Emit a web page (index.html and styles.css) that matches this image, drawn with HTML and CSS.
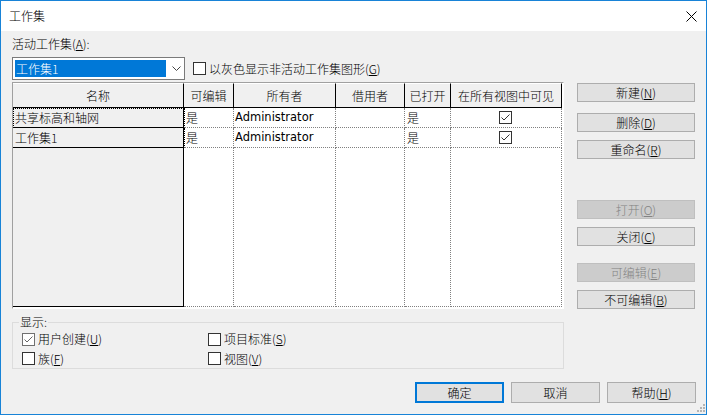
FILE: index.html
```html
<!DOCTYPE html>
<html lang="zh-CN">
<head>
<meta charset="utf-8">
<title>工作集</title>
<link rel="stylesheet" href="styles.css">
</head>
<body>
<div class="window">
  <header class="titlebar">
    <span class="title">工作集</span>
    <svg class="close" width="11" height="11" viewBox="0 0 11 11"><path d="M0.5 0.5L10.5 10.5M10.5 0.5L0.5 10.5" stroke="#000" stroke-width="1" fill="none"/></svg>
  </header>
  <main class="content">
    <div class="top">
      <div class="left">
        <div class="label">活动工作集(<u>A</u>):</div>
        <div class="combo-row">
          <div class="combo">
            <span class="combo-sel">工作集1</span>
            <svg class="chev" width="9" height="5" viewBox="0 0 9 5"><path d="M0.5 0.5L4.5 4.5L8.5 0.5" stroke="#444" stroke-width="1" fill="none"/></svg>
          </div>
          <label class="check"><span class="box"></span>以灰色显示非活动工作集图形(<u>G</u>)</label>
        </div>
        <div class="grid">
          <div class="hd">名称</div>
          <div class="hd">可编辑</div>
          <div class="hd">所有者</div>
          <div class="hd">借用者</div>
          <div class="hd">已打开</div>
          <div class="hd">在所有视图中可见</div>

          <div class="rh focus">共享标高和轴网</div>
          <div class="c first">是</div>
          <div class="c latin">Administrator</div>
          <div class="c"></div>
          <div class="c">是</div>
          <div class="c center"><span class="box tick"><svg width="11" height="11" viewBox="0 0 11 11"><path d="M1.5 5.5L4 8L9.5 2.5" stroke="#333" stroke-width="1" fill="none"/></svg></span></div>

          <div class="rh">工作集1</div>
          <div class="c first">是</div>
          <div class="c latin">Administrator</div>
          <div class="c"></div>
          <div class="c">是</div>
          <div class="c center"><span class="box tick"><svg width="11" height="11" viewBox="0 0 11 11"><path d="M1.5 5.5L4 8L9.5 2.5" stroke="#333" stroke-width="1" fill="none"/></svg></span></div>

          <div class="rh"></div>
          <div class="c"></div>
          <div class="c"></div>
          <div class="c"></div>
          <div class="c"></div>
          <div class="c"></div>
        </div>
        <fieldset class="group">
          <legend>显示:</legend>
          <div class="opts">
            <label class="check"><span class="box checked"><svg width="11" height="11" viewBox="0 0 11 11"><path d="M1.5 5.5L4 8L9.5 2.5" stroke="#666" stroke-width="1" fill="none"/></svg></span>用户创建(<u>U</u>)</label>
            <label class="check"><span class="box"></span>项目标准(<u>S</u>)</label>
            <label class="check"><span class="box"></span>族(<u>F</u>)</label>
            <label class="check"><span class="box"></span>视图(<u>V</u>)</label>
          </div>
        </fieldset>
      </div>
      <div class="right">
        <button class="btn b-new">新建(<u>N</u>)</button>
        <button class="btn b-del">删除(<u>D</u>)</button>
        <button class="btn b-ren">重命名(<u>R</u>)</button>
        <button class="btn b-open" disabled>打开(<u>O</u>)</button>
        <button class="btn b-close">关闭(<u>C</u>)</button>
        <button class="btn b-edit" disabled>可编辑(<u>E</u>)</button>
        <button class="btn b-nedit">不可编辑(<u>B</u>)</button>
      </div>
    </div>
    <div class="footer">
      <button class="btn fbtn default">确定</button>
      <button class="btn fbtn">取消</button>
      <button class="btn fbtn">帮助(<u>H</u>)</button>
    </div>
    <svg class="grip" width="8" height="8" viewBox="0 0 8 8"><g fill="#b4b4b4"><rect x="6" y="0" width="2" height="2"/><rect x="3" y="3" width="2" height="2"/><rect x="6" y="3" width="2" height="2"/><rect x="0" y="6" width="2" height="2"/><rect x="3" y="6" width="2" height="2"/><rect x="6" y="6" width="2" height="2"/></g></svg>
  </main>
</div>
</body>
</html>
```

FILE: styles.css
```css
html, body {
  margin: 0;
  padding: 0;
  background: #f0f0f0;
}
body {
  font-family: "Noto Sans CJK SC", "Liberation Sans", sans-serif;
  font-size: 12px;
  font-weight: 300;
  line-height: 14px;
  color: #000;
}
u { text-decoration: underline; text-underline-offset: 1px; }

.window {
  width: 707px;
  height: 415px;
  box-sizing: border-box;
  border: 1px solid #1883d7;
  display: flex;
  flex-direction: column;
  background: #f0f0f0;
}

.titlebar {
  height: 30px;
  flex: none;
  background: #fff;
  display: flex;
  align-items: center;
  justify-content: space-between;
  padding: 0 9px 0 8px;
}
.title { line-height: 14px; }
.close { display: block; }

.content {
  flex: 1;
  position: relative;
  padding: 0 10px 0 11px;
  display: flex;
  flex-direction: column;
}

.top { display: flex; }
.left { width: 552px; display: flex; flex-direction: column; }

.label { margin-top: 6px; height: 14px; }

.combo-row {
  margin-top: 6px;
  height: 23px;
  display: flex;
  align-items: center;
}
.combo {
  width: 173px;
  height: 23px;
  box-sizing: border-box;
  border: 1px solid #7a7a7a;
  background: #fff;
  padding: 2px;
  display: flex;
  align-items: center;
}
.combo-sel {
  width: 151px;
  height: 17px;
  line-height: 17px;
  background: #0078d7;
  color: #fff;
  padding-left: 1px;
  box-sizing: border-box;
}
.chev { margin-left: 6px; display: block; }

.check {
  display: flex;
  align-items: center;
}
.box {
  width: 13px;
  height: 13px;
  box-sizing: border-box;
  border: 1px solid #333;
  background: #fff;
  display: inline-flex;
  align-items: center;
  justify-content: center;
  flex: none;
  margin-right: 3px;
}
.box.checked { border-color: #707070; }
.box.tick { border-color: #333; }
.box svg { display: block; }
.combo-row .check { margin-left: 8px; }

.grid {
  margin-top: 2px;
  width: 552px;
  height: 227px;
  box-sizing: border-box;
  border: 1px solid;
  border-color: #a0a0a0 #fff #fff #a0a0a0;
  background: #fff;
  display: grid;
  grid-template-columns: 171px 50px 102px 69px 46px 111px;
  grid-template-rows: 25px 20px 20px 159px;
  align-content: start;
  justify-content: start;
}
.hd {
  background: #f0f0f0;
  border-right: 1px solid #000;
  border-bottom: 1px solid #000;
  border-top: 1px solid #fff;
  text-align: center;
  line-height: 23px;
  white-space: nowrap;
}
.rh {
  background: #f0f0f0;
  border-right: 1px solid #000;
  border-bottom: 1px solid #000;
  padding-left: 2px;
  line-height: 19px;
}
.rh.focus {
  outline: 1px dotted #000;
  outline-offset: -1px;
}
.c {
  border-right: 1px dotted #808080;
  border-bottom: 1px dotted #808080;
  padding-left: 2px;
  line-height: 19px;
  white-space: nowrap;
}
.c.first {
  border-left: 1px dotted #000;
  padding-left: 1px;
}
.c.latin {
  font-family: "DejaVu Sans", sans-serif;
  font-weight: 400;
  font-size: 11.5px;
  padding-left: 1px;
}
.c.center {
  display: flex;
  align-items: center;
  justify-content: center;
  padding: 0 1px 0 0;
}
.c.center .box { margin: 0; }

.group {
  margin: 6px 0 0 0;
  padding: 0 0 0 9px;
  border: 1px solid #dcdcdc;
  min-width: 0;
}
.group legend {
  padding: 0 1px;
  margin-left: -3px;
  line-height: 14px;
}
.opts {
  display: grid;
  grid-template-columns: 186px 1fr;
  grid-template-rows: 20px 19px;
}

.right {
  width: 118px;
  margin-left: 13px;
  display: flex;
  flex-direction: column;
}
.btn {
  font-family: inherit;
  font-size: 12px;
  font-weight: 300;
  line-height: 14px;
  color: #000;
  background: #e1e1e1;
  border: 1px solid #adadad;
  padding: 0;
  margin: 0;
  box-sizing: border-box;
}
.btn:disabled {
  background: #cccccc;
  border-color: #bfbfbf;
  color: #838383;
}
.right .btn { height: 19px; width: 118px; }
.right .b-new { margin-top: 52px; }
.right .b-del { margin-top: 11px; }
.right .b-ren { margin-top: 8px; }
.right .b-open { margin-top: 41px; }
.right .b-close { margin-top: 8px; }
.right .b-edit { margin-top: 17px; }
.right .b-nedit { margin-top: 8px; }

.footer {
  margin-top: 13px;
  display: flex;
  justify-content: flex-end;
  gap: 7px;
}
.fbtn { width: 89px; height: 21px; }
.fbtn.default { border: 2px solid #0078d7; }

.grip {
  position: absolute;
  right: 1px;
  bottom: 2px;
}
```
